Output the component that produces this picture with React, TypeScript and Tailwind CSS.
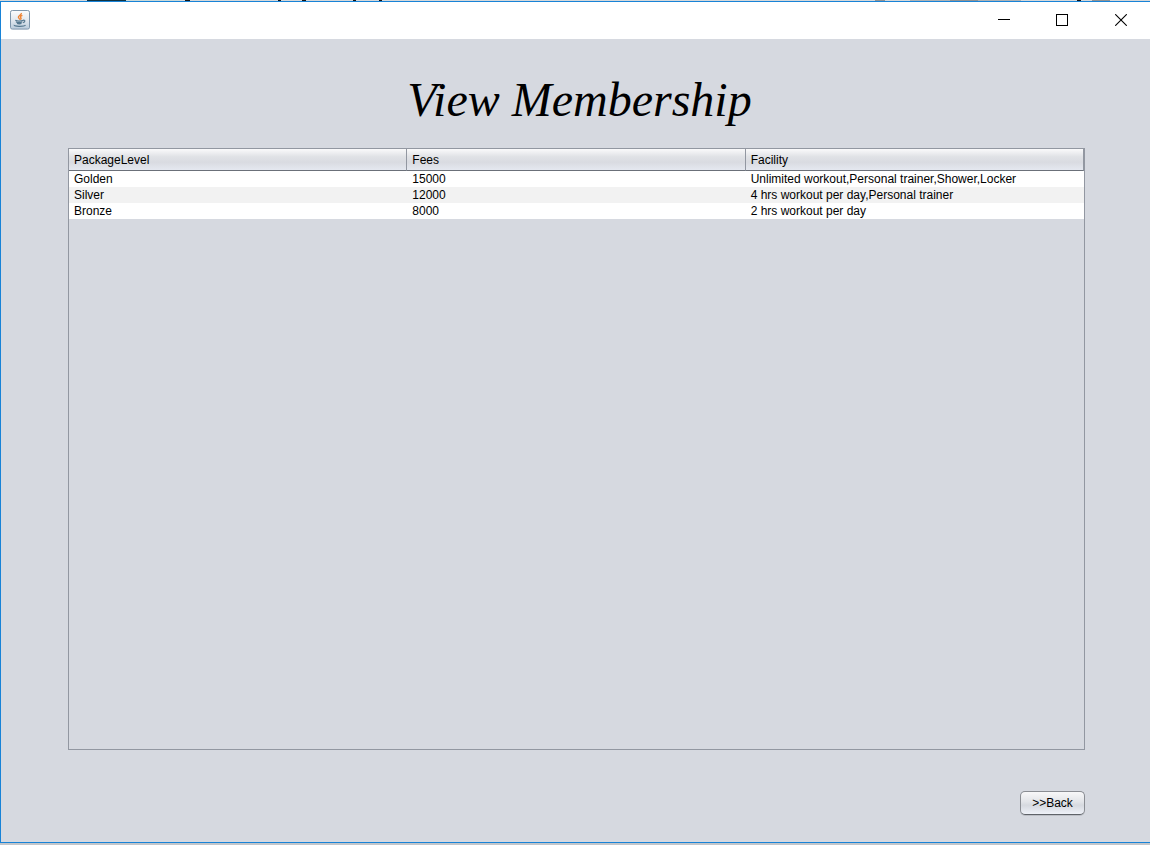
const packages = [
  { level: 'Golden', fees: '15000', facility: 'Unlimited workout,Personal trainer,Shower,Locker' },
  { level: 'Silver', fees: '12000', facility: '4 hrs workout per day,Personal trainer' },
  { level: 'Bronze', fees: '8000', facility: '2 hrs workout per day' },
];

const columns = ['PackageLevel', 'Fees', 'Facility'];

function JavaIcon() {
  return (
    <svg width="20" height="20" viewBox="0 0 20 20" aria-hidden="true">
      <defs>
        <linearGradient id="tile" x1="0" y1="0" x2="0" y2="1">
          <stop offset="0" stopColor="#fbfcfd" />
          <stop offset="0.5" stopColor="#e3e9ef" />
          <stop offset="1" stopColor="#b9cbdb" />
        </linearGradient>
      </defs>
      <rect x="0.5" y="0.5" width="19" height="18.6" rx="1.8" fill="url(#tile)" stroke="#7e96ab" />
      <path
        d="M11.4 3c.5 1.9-3.6 2.6-3 4.4.2.8 1.2 1.2 1.4 2.2M12.4 5.4c-1.8.6-2.6 1.3-1.6 2.3.6.7.2 1.3-.5 1.8"
        fill="none"
        stroke="#ee8434"
        strokeWidth="1.4"
      />
      <path
        d="M5.3 10.4c2 .8 5.5.8 8 0M6 12c1.7.7 4.5.7 6.3 0M7 13.4c1.4.5 3 .5 4.5 0M13 10.4c2.2-.8 2.7 1.3.1 2.3M4.3 14.9c-1 1.7 9.8 1.9 11.2.3"
        fill="none"
        stroke="#55788f"
        strokeWidth="1.2"
      />
    </svg>
  );
}

function DesktopEdge() {
  return (
    <svg className="block h-px w-full shrink-0" height="1" aria-hidden="true" shapeRendering="crispEdges">
      <rect width="100%" height="1" fill="#d5d8da" />
      <rect x="87" width="39" height="1" fill="#103342" />
      <rect x="126" width="54" height="1" fill="#c9d9d9" />
      <path d="M185 .5h5M278 .5h3M302 .5h4M353 .5h3M379 .5h3M1077 .5h4" stroke="#141414" />
      <path d="M910 .5h111" stroke="#adb2b5" />
      <path d="M875 .5h10M950 .5h28M1092 .5h18" stroke="#909293" />
    </svg>
  );
}

function TitleBar() {
  const control = 'flex items-center justify-center pb-px text-black hover:bg-[#e5e5e5]';
  return (
    <header className="flex h-[37px] shrink-0 justify-between bg-white">
      <div className="flex items-center pb-0.5 pl-[9px]">
        <JavaIcon />
      </div>
      <div className="grid grid-cols-[56px_60px_58px]">
        <button type="button" aria-label="Minimize" className={control}>
          <svg width="12" height="12" viewBox="0 0 12 12" shapeRendering="crispEdges">
            <path d="M0 5.5h12" stroke="currentColor" />
          </svg>
        </button>
        <button type="button" aria-label="Maximize" className={control}>
          <svg width="12" height="12" viewBox="0 0 12 12" shapeRendering="crispEdges">
            <path d="M.5.5h11v11H.5z" fill="none" stroke="currentColor" />
          </svg>
        </button>
        <button type="button" aria-label="Close" className={control}>
          <svg width="12" height="12" viewBox="0 0 12 12">
            <path d="M.2.2l11.6 11.6M11.8.2L.2 11.8" stroke="currentColor" strokeWidth="1.1" />
          </svg>
        </button>
      </div>
    </header>
  );
}

export default function App() {
  const cell = 'p-0 pt-px pl-[5px] leading-[15px]';
  return (
    <div className="flex min-h-screen flex-col bg-[#c3c6ca] pb-[2px] font-['Liberation_Sans',Arial,sans-serif] text-xs text-black">
      <DesktopEdge />
      <div className="flex flex-1 flex-col border-y border-l border-[#1883d7] bg-[#d6d9e0]">
        <TitleBar />
        <main className="flex flex-1 flex-col pr-[65px] pb-[27px] pl-[67px]">
          <h1 className="pt-[33px] pl-1.5 text-center font-['Liberation_Serif','Times_New_Roman',serif] text-[48px] leading-[56px] italic">
            View Membership
          </h1>
          <div className="mt-5 flex-1 border border-[#9297a1]">
            <table className="w-full table-fixed border-separate border-spacing-0 text-left">
              <thead>
                <tr className="bg-[linear-gradient(#fafafb,#e0e2e6_35%,#d9dbe1_60%,#e6eaf2)]">
                  {columns.map((name) => (
                    <th
                      key={name}
                      scope="col"
                      className="h-[22px] border-r border-b border-r-[#9297a1] border-b-[#6b7079] p-0 pl-[5px] leading-4 font-normal"
                    >
                      {name}
                    </th>
                  ))}
                </tr>
              </thead>
              <tbody>
                {packages.map((item) => (
                  <tr key={item.level} className="h-4 bg-white even:bg-[#f2f2f2]">
                    <td className={cell}>{item.level}</td>
                    <td className={cell}>{item.fees}</td>
                    <td className={cell}>{item.facility}</td>
                  </tr>
                ))}
              </tbody>
            </table>
          </div>
          <button
            type="button"
            className="mt-[41px] h-6 w-[65px] self-end rounded-[5px] border border-[#8a8d93] border-b-[#5f6369] bg-[linear-gradient(#f8f8f9,#e2e4e8_45%,#d6d9df_60%,#eef1f8)] shadow-[0_1px_0_#bcbfc6]"
          >
            &gt;&gt;Back
          </button>
        </main>
      </div>
    </div>
  );
}
